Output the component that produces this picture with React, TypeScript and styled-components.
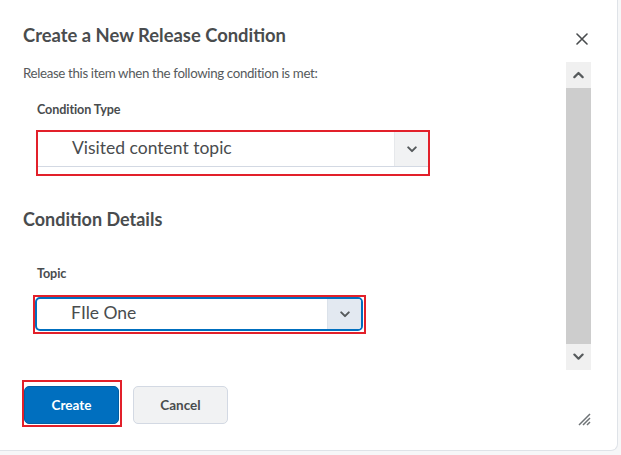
import styled, { createGlobalStyle } from "styled-components";

const GlobalStyle = createGlobalStyle`
  html, body {
    margin: 0;
    padding: 0;
    background: #f6f7f8;
  }
  body {
    font-family: Lato, "Open Sans", Arial, sans-serif;
    color: #494c4e;
  }
`;

const Dialog = styled.div`
  width: 617px;
  height: 450px;
  background: #ffffff;
  border-right: 1px solid #dfe3e8;
  border-bottom: 1px solid #dfe3e8;
  border-bottom-right-radius: 7px;
  display: flex;
  flex-direction: column;
  box-sizing: content-box;
`;

const Header = styled.div`
  height: 62px;
  display: flex;
  align-items: flex-start;
  justify-content: space-between;
  padding: 0 29px 0 23px;
  box-sizing: border-box;
`;

const Title = styled.h2`
  margin: 22px 0 0;
  font-size: 18.4px;
  line-height: 27px;
  font-weight: 700;
  color: #494c4e;
`;

const CloseButton = styled.button`
  margin-top: 32px;
  width: 13px;
  height: 13px;
  padding: 0;
  border: none;
  background: none;
  display: flex;
  align-items: center;
  justify-content: center;
  cursor: pointer;
`;

const Body = styled.div`
  height: 308px;
  display: flex;
  padding-right: 26px;
`;

const Content = styled.div`
  flex: 1;
  padding-left: 23px;
  overflow: hidden;
`;

const Intro = styled.p`
  margin: 0;
  font-size: 13.3px;
  letter-spacing: -0.35px;
  line-height: 20px;
  padding-top: 1px;
  color: #565a5c;
`;

const Field = styled.div<{ $top: number }>`
  margin-top: ${(p) => p.$top}px;
  padding-left: 14px;
`;

const Label = styled.div`
  font-size: 12.6px;
  letter-spacing: -0.1px;
  line-height: 18px;
  font-weight: 700;
  color: #494c4e;
`;

const SectionHeading = styled.h3`
  margin: 31px 0 0;
  font-size: 18px;
  line-height: 24px;
  font-weight: 700;
  color: #494c4e;
`;

const Highlight = styled.div<{ $pad: string; $top: number; $shift?: number }>`
  display: inline-block;
  border: 2px solid #e2202a;
  padding: ${(p) => p.$pad};
  margin-top: ${(p) => p.$top}px;
  margin-left: ${(p) => p.$shift ?? 0}px;
  vertical-align: top;
`;

const SelectBox = styled.div<{ $width: number; $focused?: boolean }>`
  width: ${(p) => p.$width}px;
  height: ${(p) => (p.$focused ? 34 : 35)}px;
  box-sizing: border-box;
  display: flex;
  align-items: stretch;
  background: #ffffff;
  border: ${(p) => (p.$focused ? "2px solid #006fbf" : "none")};
  border-bottom: ${(p) =>
    p.$focused ? "2px solid #006fbf" : "1px solid #d3d9e3"};
  border-radius: ${(p) => (p.$focused ? "5px" : "0")};
  overflow: hidden;
`;

const SelectValue = styled.div`
  flex: 1;
  display: flex;
  align-items: center;
  padding: 0 0 3px 34px;
  font-size: 17.5px;
  color: #494c4e;
`;

const SelectArrow = styled.div<{ $focused?: boolean }>`
  width: 33px;
  display: flex;
  align-items: center;
  justify-content: center;
  background: ${(p) => (p.$focused ? "#e3e9f1" : "#f1f2f3")};
  border-left: 1px solid ${(p) => (p.$focused ? "#dbe2ea" : "#e6e8eb")};
`;

const Scrollbar = styled.div`
  width: 25px;
  display: flex;
  flex-direction: column;
  background: #f0f0f0;
`;

const ScrollArrow = styled.div`
  height: 26px;
  display: flex;
  align-items: center;
  justify-content: center;
  background: #f0f0f0;
`;

const ScrollThumb = styled.div`
  flex: 1;
  background: #cdcdcd;
`;

const Footer = styled.div`
  flex: 1;
  display: flex;
  align-items: flex-start;
  padding: 10px 26px 0 22px;
`;

const Buttons = styled.div`
  flex: 1;
  display: flex;
  align-items: flex-start;
  gap: 11px;
`;

const Button = styled.button<{ $primary?: boolean }>`
  width: 95px;
  height: 38px;
  border-radius: 5px;
  font-family: Lato, "Open Sans", Arial, sans-serif;
  font-size: 13.5px;
  font-weight: 700;
  cursor: pointer;
  background: ${(p) => (p.$primary ? "#006fbf" : "#f1f2f3")};
  color: ${(p) => (p.$primary ? "#ffffff" : "#494c4e")};
  border: 1px solid ${(p) => (p.$primary ? "#005fa3" : "#d3d9e3")};
`;

const CancelButton = styled(Button)`
  margin-top: 6px;
`;

const ResizeHandle = styled.div`
  margin-top: 30px;
  width: 13px;
  height: 15px;
`;

function Chevron({ up = false, size = 12 }: { up?: boolean; size?: number }) {
  return (
    <svg width={size} height={size * 0.7} viewBox="0 0 12 8">
      <path
        d={up ? "M1.5 6.5 L6 2 L10.5 6.5" : "M1.5 1.5 L6 6 L10.5 1.5"}
        fill="none"
        stroke="#565a5c"
        strokeWidth="2.4"
        strokeLinecap="round"
        strokeLinejoin="round"
      />
    </svg>
  );
}

function Select({ value, width, focused }: { value: string; width: number; focused?: boolean }) {
  return (
    <SelectBox $width={width} $focused={focused}>
      <SelectValue>{value}</SelectValue>
      <SelectArrow $focused={focused}>
        <Chevron size={10} />
      </SelectArrow>
    </SelectBox>
  );
}

export default function App() {
  return (
    <>
      <GlobalStyle />
      <Dialog>
        <Header>
          <Title>Create a New Release Condition</Title>
          <CloseButton aria-label="Close">
            <svg width="12" height="12" viewBox="0 0 12 12">
              <path
                d="M1 1 L11 11 M11 1 L1 11"
                stroke="#494c4e"
                strokeWidth="1.6"
                strokeLinecap="round"
              />
            </svg>
          </CloseButton>
        </Header>
        <Body>
          <Content>
            <Intro>Release this item when the following condition is met:</Intro>
            <Field $top={18}>
              <Label>Condition Type</Label>
              <Highlight $pad="0 0 7px 0" $top={11} $shift={-1}>
                <Select value="Visited content topic" width={390} />
              </Highlight>
            </Field>
            <SectionHeading>Condition Details</SectionHeading>
            <Field $top={34}>
              <Label>Topic</Label>
              <Highlight $pad="0 1px 1px 0" $top={12} $shift={-4}>
                <Select value="FIle One" width={328} focused />
              </Highlight>
            </Field>
          </Content>
          <Scrollbar>
            <ScrollArrow>
              <Chevron up size={11} />
            </ScrollArrow>
            <ScrollThumb />
            <ScrollArrow>
              <Chevron size={11} />
            </ScrollArrow>
          </Scrollbar>
        </Body>
        <Footer>
          <Buttons>
            <Highlight $pad="4px 1px 1px 0" $top={0}>
              <Button $primary>Create</Button>
            </Highlight>
            <CancelButton>Cancel</CancelButton>
          </Buttons>
          <ResizeHandle>
            <svg width="13" height="15" viewBox="0 0 13 15">
              <path
                d="M1 14 L12 3 M5 14 L12 7 M9 14 L12 11"
                stroke="#6e7376"
                strokeWidth="1.5"
              />
            </svg>
          </ResizeHandle>
        </Footer>
      </Dialog>
    </>
  );
}
